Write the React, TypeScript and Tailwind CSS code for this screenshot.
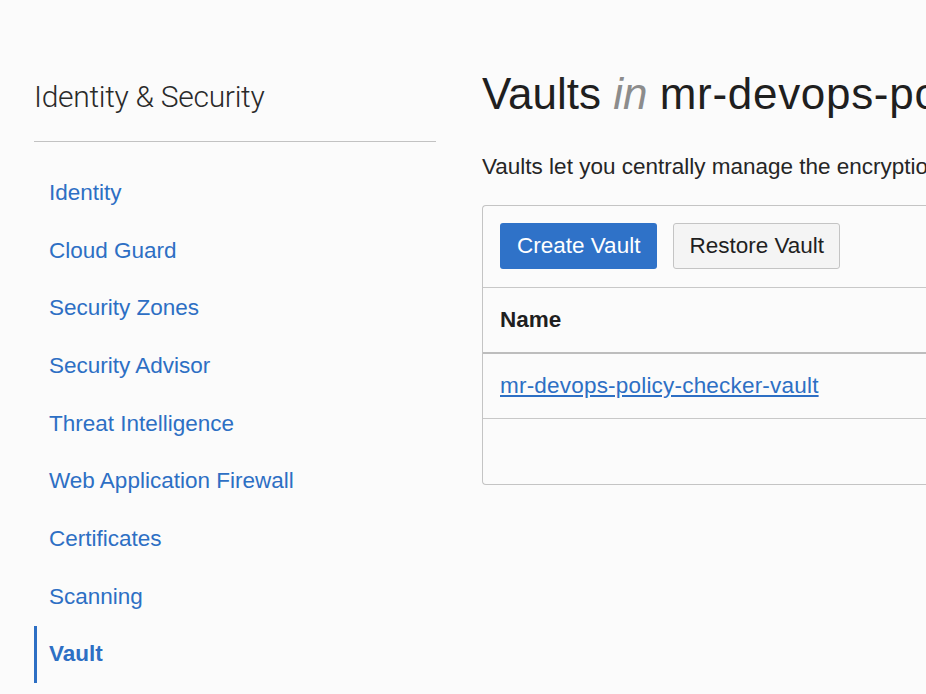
import React from "react";

const items = [
  "Identity",
  "Cloud Guard",
  "Security Zones",
  "Security Advisor",
  "Threat Intelligence",
  "Web Application Firewall",
  "Certificates",
  "Scanning",
];

export default function App() {
  return (
    <div
      className="w-[926px] h-[694px] overflow-hidden bg-[#fbfbfb] flex"
      style={{ fontFamily: '"Liberation Sans", Arial, sans-serif' }}
    >
      <aside className="w-[402px] ml-[34px] shrink-0 pt-[77px]">
        <h2 className="text-[30px] leading-[40px] font-light text-[#2a2a2a] tracking-[-0.3px]" style={{ fontFamily: 'Roboto, "Liberation Sans", sans-serif' }}>
          Identity &amp; Security
        </h2>
        <div className="mt-[24px] h-px bg-[#c2c2c2]" />
        <nav className="mt-[22px] flex flex-col">
          {items.map((t) => (
            <a
              key={t}
              className="h-[57.7px] flex items-center pl-[15px] text-[22.5px] text-[#2d6fc4]"
            >
              {t}
            </a>
          ))}
          <a className="h-[57px] flex items-center pl-[12px] border-l-[3px] border-[#2d6fc4] text-[22.5px] font-bold text-[#2d6fc4]">
            Vault
          </a>
        </nav>
      </aside>
      <main className="ml-[46px] flex-1 min-w-0 pt-[68px]">
        <h1 className="text-[44px] leading-[52px] text-[#1f1f1f] whitespace-nowrap">
          Vaults <i className="text-[#8c8c8c]">in</i>{" "}
          <span className="tracking-[0.7px]">mr-devops-policy-checker</span>
        </h1>
        <p className="mt-[32px] text-[22.5px] leading-[30px] text-[#262626] whitespace-nowrap">
          Vaults let you centrally manage the encryption keys that protect your data
        </p>
        <div className="mt-[23px] w-[500px] h-[280px] border border-[#c4c4c4] rounded-l-[4px] border-r-0 bg-[#fbfbfb]">
          <div className="flex gap-[16px] px-[17px] pt-[17px] pb-[18px] border-b border-[#c8c8c8]">
            <button className="h-[46px] px-[17px] rounded-[3px] bg-[#2f72c8] text-white text-[22.5px]">
              Create Vault
            </button>
            <button className="h-[46px] px-[15px] rounded-[3px] bg-[#f4f4f4] border border-[#c4c4c4] text-[#1f1f1f] text-[22.5px]">
              Restore Vault
            </button>
          </div>
          <div className="h-[66px] flex items-center px-[17px] border-b-2 border-[#bdbdbd] text-[22.5px] font-bold text-[#1f1f1f]">
            Name
          </div>
          <div className="h-[65px] flex items-center px-[17px] border-b border-[#c8c8c8]">
            <a className="text-[22.5px] tracking-[0.2px] text-[#2d6fc4] underline">
              mr-devops-policy-checker-vault
            </a>
          </div>
        </div>
      </main>
    </div>
  );
}
